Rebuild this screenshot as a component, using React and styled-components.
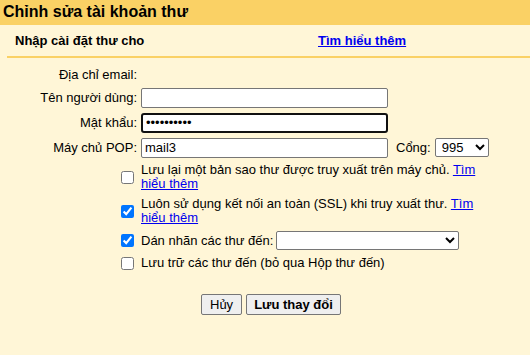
import React from "react";
import styled, { createGlobalStyle } from "styled-components";

const Global = createGlobalStyle`
  html, body { margin: 0; padding: 0; background: #fff6d7; }
  body { font-family: "Liberation Sans", Arial, sans-serif; font-size: 13px; color: #000; }
`;

const Page = styled.div`
  width: 530px;
  height: 355px;
  background: #fff6d7;
  overflow: hidden;
`;

const Header = styled.div`
  height: 25px;
  background: #fad165;
  padding-left: 3px;
  font-size: 16px;
  font-weight: bold;
  line-height: 23px;
`;

const SubRow = styled.div`
  display: flex;
  align-items: center;
  height: 31px;
  padding-left: 15px;
  font-weight: bold;
`;

const SubTitle = styled.span`
  width: 303px;
`;

const Link = styled.a`
  color: #0000ee;
  text-decoration: underline;
  cursor: pointer;
  font-weight: ${(p) => (p.$bold ? "bold" : "normal")};
`;

const Divider = styled.div`
  height: 2px;
  margin-left: 7px;
  background: #fad165;
`;

const Form = styled.div`
  padding-top: 5px;
  display: flex;
  flex-direction: column;
`;

const Row = styled.div`
  display: grid;
  grid-template-columns: 137px auto;
  column-gap: 4px;
  align-items: center;
  height: ${(p) => p.$h}px;
`;

const Label = styled.div`
  text-align: right;
`;

const Field = styled.div`
  display: flex;
  align-items: center;
  gap: 4px;
`;

const PortLabel = styled.span`
  margin-left: 4px;
`;

const TextInput = styled.input`
  box-sizing: border-box;
  width: 247px;
  height: 20px;
  margin: 0;
  padding: 1px 3px;
  font-family: "Liberation Sans", Arial, sans-serif;
  font-size: 13px;
  color: #000;
  background: #fff;
  border: ${(p) => (p.$focused ? "2px solid #101010" : "1px solid #767676")};
  border-radius: ${(p) => (p.$focused ? "3px" : "2px")};
  outline: none;
`;

const Select = styled.select`
  box-sizing: border-box;
  width: ${(p) => p.$w}px;
  height: 19px;
  margin: 0;
  padding: 0 0 0 2px;
  font-family: "Liberation Sans", Arial, sans-serif;
  font-size: 13px;
  color: #000;
  background: #fff;
  border: 1px solid #767676;
  border-radius: 2px;
`;

const CheckRow = styled.div`
  display: grid;
  grid-template-columns: 137px 350px;
  column-gap: 4px;
  align-items: center;
  padding: ${(p) => p.$pad}px 0;
`;

const CheckCell = styled.div`
  display: flex;
  justify-content: flex-end;
  padding-right: 3px;
`;

const Check = styled.input`
  width: 13px;
  height: 13px;
  margin: 0;
  accent-color: #0075ff;
`;

const CheckText = styled.div`
  line-height: 14px;
  display: flex;
  align-items: center;
  gap: 3px;
`;

const Buttons = styled.div`
  display: flex;
  gap: 4px;
  padding-left: 201px;
  margin-top: 21px;
`;

const Button = styled.button`
  box-sizing: border-box;
  height: 21px;
  padding: 0 ${(p) => (p.$bold ? 7 : 8)}px;
  font-family: "Liberation Sans", Arial, sans-serif;
  font-size: 13px;
  font-weight: ${(p) => (p.$bold ? "bold" : "normal")};
  color: #000;
  background: #efefef;
  border: 1px solid #767676;
  border-radius: 2px;
`;

export default function App() {
  return (
    <Page>
      <Global />
      <Header>Chỉnh sửa tài khoản thư</Header>
      <SubRow>
        <SubTitle>Nhập cài đặt thư cho</SubTitle>
        <Link $bold>Tìm hiểu thêm</Link>
      </SubRow>
      <Divider />
      <Form>
        <Row $h={22}>
          <Label>Địa chỉ email:</Label>
          <Field />
        </Row>
        <Row $h={25}>
          <Label>Tên người dùng:</Label>
          <Field>
            <TextInput type="text" defaultValue="" />
          </Field>
        </Row>
        <Row $h={25}>
          <Label>Mật khẩu:</Label>
          <Field>
            <TextInput type="password" $focused defaultValue="abcdefghij" />
          </Field>
        </Row>
        <Row $h={25}>
          <Label>Máy chủ POP:</Label>
          <Field>
            <TextInput type="text" defaultValue="mail3" />
            <PortLabel>Cổng:</PortLabel>
            <Select $w={54} defaultValue="995">
              <option value="995">995</option>
              <option value="110">110</option>
            </Select>
          </Field>
        </Row>
        <CheckRow $pad={3}>
          <CheckCell>
            <Check type="checkbox" />
          </CheckCell>
          <CheckText>
            <span>
              Lưu lại một bản sao thư được truy xuất trên máy chủ. <Link>Tìm hiểu thêm</Link>
            </span>
          </CheckText>
        </CheckRow>
        <CheckRow $pad={3}>
          <CheckCell>
            <Check type="checkbox" defaultChecked />
          </CheckCell>
          <CheckText>
            <span>
              Luôn sử dụng kết nối an toàn (SSL) khi truy xuất thư. <Link>Tìm hiểu thêm</Link>
            </span>
          </CheckText>
        </CheckRow>
        <CheckRow $pad={3}>
          <CheckCell>
            <Check type="checkbox" defaultChecked />
          </CheckCell>
          <CheckText>
            <span>Dán nhãn các thư đến:</span>
            <Select $w={183} defaultValue="">
              <option value=""></option>
            </Select>
          </CheckText>
        </CheckRow>
        <CheckRow $pad={3}>
          <CheckCell>
            <Check type="checkbox" />
          </CheckCell>
          <CheckText>
            <span>Lưu trữ các thư đến (bỏ qua Hộp thư đến)</span>
          </CheckText>
        </CheckRow>
      </Form>
      <Buttons>
        <Button>Hủy</Button>
        <Button $bold>Lưu thay đổi</Button>
      </Buttons>
    </Page>
  );
}
